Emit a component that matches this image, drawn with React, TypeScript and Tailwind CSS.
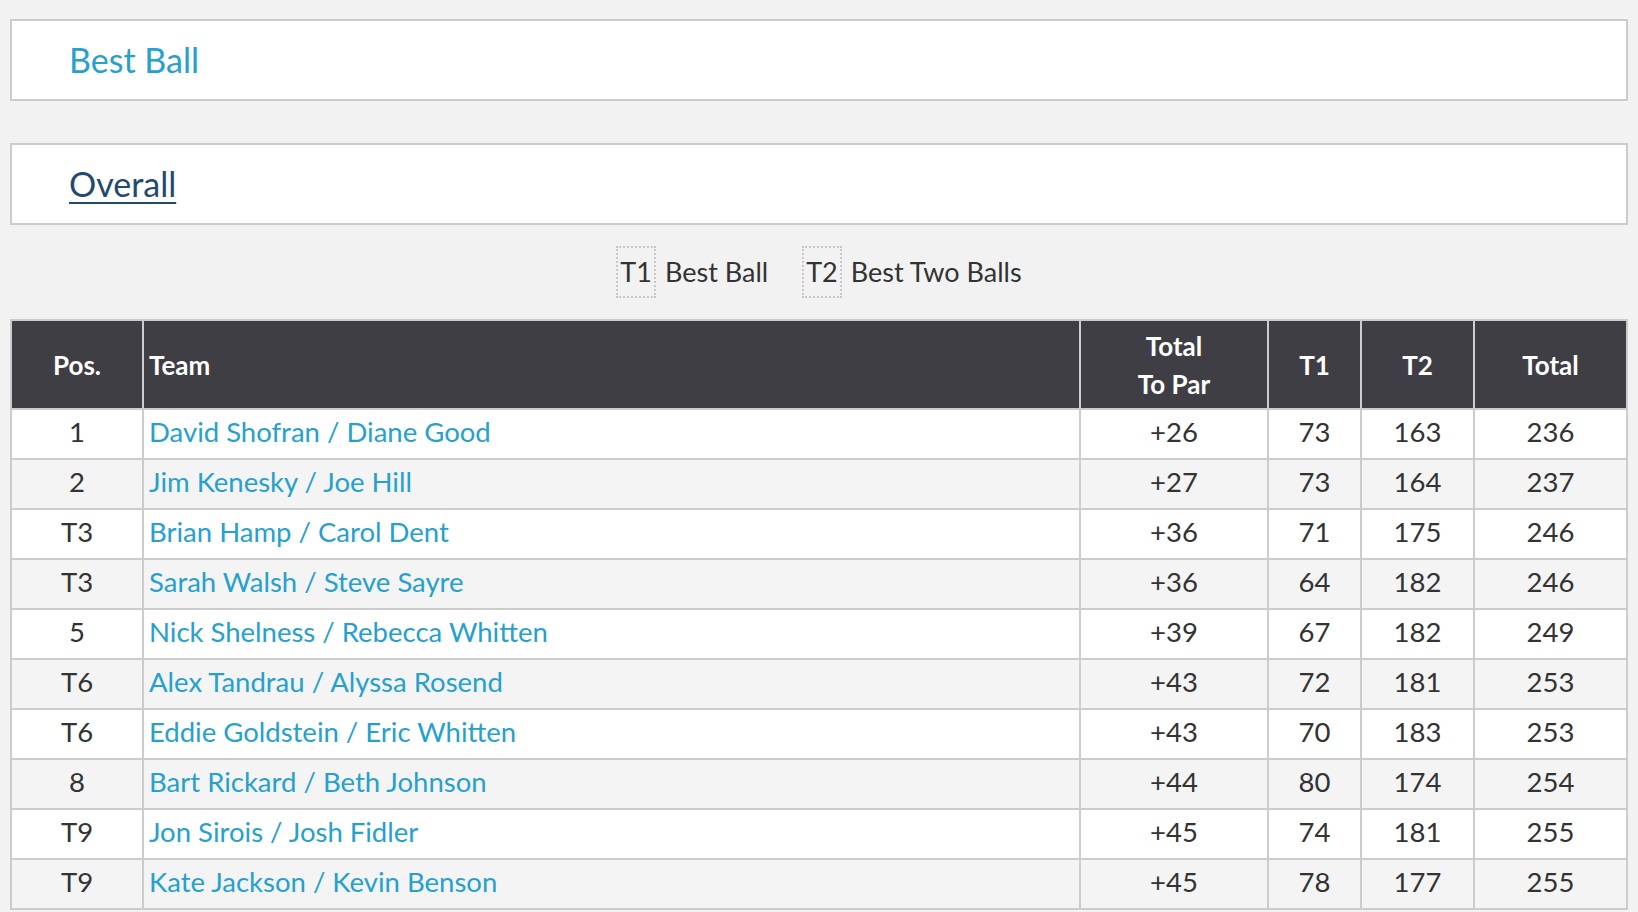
const rows = [
  ['1', 'David Shofran / Diane Good', '+26', '73', '163', '236'],
  ['2', 'Jim Kenesky / Joe Hill', '+27', '73', '164', '237'],
  ['T3', 'Brian Hamp / Carol Dent', '+36', '71', '175', '246'],
  ['T3', 'Sarah Walsh / Steve Sayre', '+36', '64', '182', '246'],
  ['5', 'Nick Shelness / Rebecca Whitten', '+39', '67', '182', '249'],
  ['T6', 'Alex Tandrau / Alyssa Rosend', '+43', '72', '181', '253'],
  ['T6', 'Eddie Goldstein / Eric Whitten', '+43', '70', '183', '253'],
  ['8', 'Bart Rickard / Beth Johnson', '+44', '80', '174', '254'],
  ['T9', 'Jon Sirois / Josh Fidler', '+45', '74', '181', '255'],
  ['T9', 'Kate Jackson / Kevin Benson', '+45', '78', '177', '255'],
];

export default function App() {
  return (
    <main className="bg-[#f2f2f2] min-h-screen px-[10px] pt-[19px] font-['Lato',sans-serif] text-[#333]">
      {/* Title box */}
      <section className="bg-white border-2 border-[#cccccc] h-[82px] flex items-center pl-[57px]">
        <h1 className="text-[34px] text-[#27a0cd] leading-none">Best Ball</h1>
      </section>

      {/* Round selector */}
      <section className="mt-[42px] bg-white border-2 border-[#cccccc] h-[82px] flex items-center pl-[57px]">
        <a href="#" className="text-[34px] text-[#23496e] underline underline-offset-[5px] decoration-2 leading-none">
          Overall
        </a>
      </section>

      {/* Legend */}
      <div className="flex justify-center items-center gap-[34px] h-[94px] text-[27px]">
        <div className="flex items-center gap-[9px]">
          <span className="border-2 border-dotted border-[#c8c8c8] h-[52px] px-[2px] flex items-center">T1</span>
          <span>Best Ball</span>
        </div>
        <div className="flex items-center gap-[9px]">
          <span className="border-2 border-dotted border-[#c8c8c8] h-[52px] px-[2px] flex items-center">T2</span>
          <span>Best Two Balls</span>
        </div>
      </div>

      <table className="w-full border-collapse border-2 border-[#cccccc] text-[27.5px]">
        <thead>
          <tr className="bg-[#3f3e44] text-white font-bold h-[89px] leading-[38px] text-[26px]">
            <th className="w-[132px] border-2 border-[#cccccc] text-center">Pos.</th>
            <th className="border-2 border-[#cccccc] text-left pl-[5px]">Team</th>
            <th className="w-[188px] border-2 border-[#cccccc] text-center">
              Total
              <br />
              To Par
            </th>
            <th className="w-[93px] border-2 border-[#cccccc] text-center">T1</th>
            <th className="w-[113px] border-2 border-[#cccccc] text-center">T2</th>
            <th className="w-[153px] border-2 border-[#cccccc] text-center">Total</th>
          </tr>
        </thead>
        <tbody>
          {rows.map((r, i) => (
            <tr key={i} className={(i % 2 === 0 ? 'bg-white' : 'bg-[#f4f4f4]') + ' h-[50px]'}>
              <td className="border-2 border-[#cccccc] text-center pb-[4px]">{r[0]}</td>
              <td className="border-2 border-[#cccccc] pl-[5px] pb-[4px]">
                <a href="#" className="text-[#26a0cf]">{r[1]}</a>
              </td>
              <td className="border-2 border-[#cccccc] text-center pb-[4px]">{r[2]}</td>
              <td className="border-2 border-[#cccccc] text-center pb-[4px]">{r[3]}</td>
              <td className="border-2 border-[#cccccc] text-center pb-[4px]">{r[4]}</td>
              <td className="border-2 border-[#cccccc] text-center pb-[4px]">{r[5]}</td>
            </tr>
          ))}
        </tbody>
      </table>
    </main>
  );
}
